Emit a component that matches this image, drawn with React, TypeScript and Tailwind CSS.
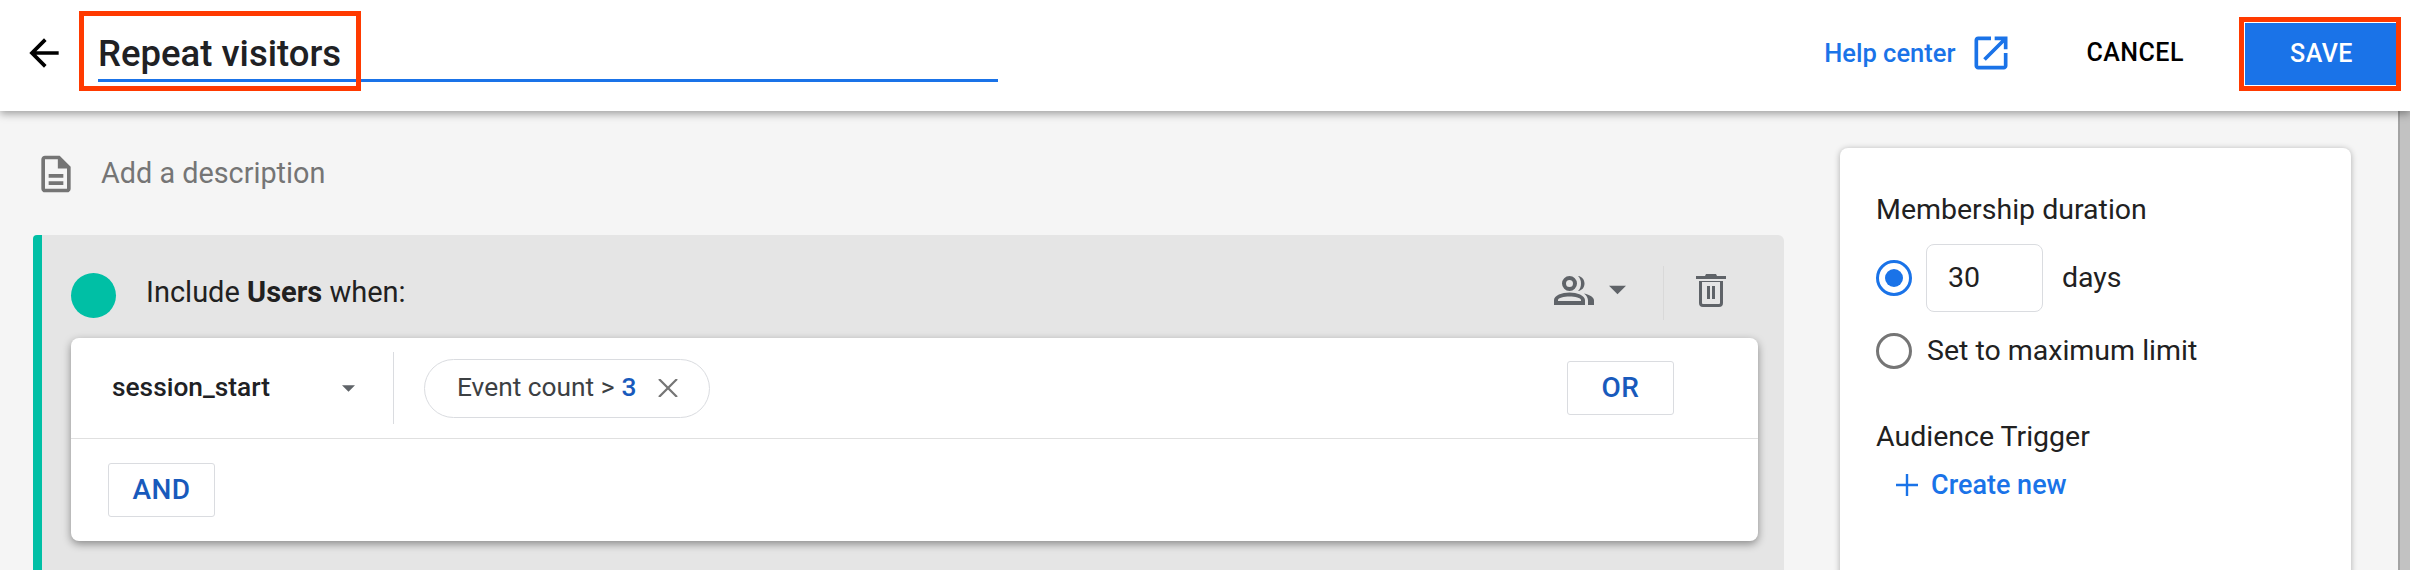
const font = "font-['Roboto',sans-serif]";

function Triangle({ className }: { className: string }) {
  return (
    <svg viewBox="0 0 10 5" className={className}>
      <path d="M0 0h10L5 5z" fill="currentColor" />
    </svg>
  );
}

function RadioOption({ checked }: { checked?: boolean }) {
  return (
    <span
      className={`flex w-[36px] h-[36px] shrink-0 items-center justify-center rounded-full border-[3px] ${
        checked ? "border-[#1a73e8]" : "border-[#757575]"
      }`}
    >
      {checked && <span className="w-[18px] h-[18px] rounded-full bg-[#1a73e8]" />}
    </span>
  );
}

function OutlineButton({ label }: { label: string }) {
  return (
    <button className="flex h-[54px] w-[107px] items-center justify-center rounded-[3px] border border-[#dadce0] bg-white text-[28px] font-medium tracking-[0.5px] text-[#185abc]">
      {label}
    </button>
  );
}

export default function App() {
  return (
    <div className={`${font} relative flex h-[570px] w-[2410px] flex-col overflow-hidden bg-[#f5f5f5] text-[#212121]`}>
      <header className="relative z-10 flex h-[111px] shrink-0 items-center bg-white pb-[5px] pl-[22px] pr-[14px] shadow-[0_3px_8px_rgba(0,0,0,0.35)]">
        <svg viewBox="0 0 24 24" className="h-[44px] w-[44px] shrink-0 text-black">
          <path fill="currentColor" d="M20 11H7.83l5.59-5.59L12 4l-8 8 8 8 1.41-1.41L7.83 13H20v-2z" />
        </svg>
        <div className="ml-[32px] h-[58px] w-[900px] border-b-[3px] border-[#1a73e8] text-[36.5px] font-medium leading-[60px] text-[#202124]">
          Repeat visitors
        </div>
        <div className="ml-auto flex items-center">
          <span className="text-[25.5px] font-medium text-[#1a73e8]">Help center</span>
          <svg viewBox="0 0 24 24" className="ml-[14px] h-[44px] w-[44px] text-[#1a73e8]">
            <path fill="currentColor" d="M19 19H5V5h7V3H5c-1.11 0-2 .9-2 2v14c0 1.1.89 2 2 2h14c1.1 0 2-.9 2-2v-7h-2v7zM14 3v2h3.59l-9.83 9.83 1.41 1.41L19 6.41V10h2V3h-7z" />
          </svg>
          <span className="ml-[73px] text-[25px] font-medium tracking-[0.5px] text-black">CANCEL</span>
          <button className="ml-[61px] mt-[2px] flex h-[62px] w-[151px] items-center justify-center bg-[#1a73e8] pl-[2px] text-[25px] font-medium tracking-[0.5px] text-white">
            SAVE
          </button>
        </div>
      </header>

      <div className="flex min-h-0 flex-1">
        <main className="flex w-[1751px] ml-[33px] shrink-0 flex-col">
          <div className="mt-[44px] ml-[1px] flex h-[37px] items-center">
            <svg viewBox="0 0 24 24" className="h-[44px] w-[44px] shrink-0 text-[#757575]">
              <path fill="currentColor" d="M8 16h8v2H8zm0-4h8v2H8zm6-10H6c-1.1 0-2 .9-2 2v16c0 1.1.89 2 1.99 2H18c1.1 0 2-.9 2-2V8l-6-6zm4 18H6V4h7v5h5v11z" />
            </svg>
            <span className="ml-[23px] text-[28.8px] text-[#757575]">Add a description</span>
          </div>

          <section className="mt-[43px] flex-1 rounded-tr-[6px] rounded-tl-[4px] border-l-[9px] border-[#00bfa5] bg-[#e5e5e5] pl-[29px] pr-[26px]">
            <div className="flex h-[103px] items-center pt-[17px]">
              <span className="h-[45px] w-[45px] rounded-full bg-[#00bfa5]" />
              <span className="mb-[4px] ml-[30px] text-[29px] text-[#212121]">
                Include <b className="font-bold">Users</b> when:
              </span>
              <div className="mb-[10px] ml-auto flex items-center text-[#5f6368]">
                <svg viewBox="0 0 40 29" className="h-[29px] w-[40px]">
                  <path fill="currentColor" fillRule="evenodd" d="M15.500 0a7.500 7.500 0 1 1 0 15a7.500 7.500 0 0 1 0-15zm0 4a3.500 3.500 0 1 0 0 7a3.500 3.500 0 0 0 0-7zM0 29v-5c0-4.500 8-7.500 15.500-7.500S31 19.500 31 24v5zm4-4h23v-1c0-2-6-3.500-11.500-3.500S4 22 4 24z" />
                  <path fill="currentColor" d="M24 0c4.500.5 6.500 4 6.500 7.500S28.500 14.500 24 15c2-2 3-4.500 3-7.500S26 2 24 0zM30 17.500c6 1.500 10 3.500 10 7V29h-6v-4.500c0-2.500-1.500-5-4-7z" />
                </svg>
                <Triangle className="ml-[15px] h-[10px] w-[17px]" />
                <span className="ml-[37px] mr-[32px] mt-[6px] h-[54px] w-px bg-[#d9d9d9]" />
                <svg viewBox="0 0 30 33" className="mr-[32px] h-[33px] w-[30px]">
                  <path fill="currentColor" fillRule="evenodd" d="M10 0h10l1 2h9v3H0V2h9zM3 7h24v22a4 4 0 0 1-4 4H7a4 4 0 0 1-4-4zm3 1v21a1 1 0 0 0 1 1h16a1 1 0 0 0 1-1V8zm5 4h3v13h-3zm5 0h3v13h-3z" />
                </svg>
              </div>
            </div>

            <div className="h-[203px] rounded-[8px] bg-white shadow-[0_3px_8px_rgba(0,0,0,0.4)]">
              <div className="flex h-[101px] items-center border-b border-[#e0e0e0] pl-[41px]">
                <span className="w-[230px] text-[26.3px] font-medium text-[#202124]">session_start</span>
                <Triangle className="h-[7px] w-[13px] text-[#5f6368]" />
                <span className="ml-[38px] h-[72px] w-px bg-[#dadce0]" />
                <div className="ml-[30px] flex h-[59px] w-[286px] items-center rounded-full border border-[#dadce0] pl-[32px] text-[26.3px]">
                  <span className="text-[#3c4043]">Event count &gt;</span>
                  <span className="ml-[7px] font-medium text-[#185abc]">3</span>
                  <svg viewBox="0 0 20 18" className="ml-[22px] h-[18px] w-[20px] text-[#757575]">
                    <path stroke="currentColor" strokeWidth="2.2" d="M1 0l18 18M19 0L1 18" fill="none" />
                  </svg>
                </div>
                <div className="ml-auto mr-[84px]">
                  <OutlineButton label="OR" />
                </div>
              </div>
              <div className="pl-[37px] pt-[24px]">
                <OutlineButton label="AND" />
              </div>
            </div>
          </section>
        </main>

        <aside className="ml-[56px] mt-[37px] h-[500px] w-[511px] rounded-[8px] bg-white pl-[36px] shadow-[0_1px_6px_rgba(0,0,0,0.3)]">
          <div className="flex h-[82px] items-end text-[28.5px] leading-[40px]">Membership duration</div>
          <div className="mt-[14px] flex items-center">
            <RadioOption checked />
            <div className="ml-[14px] flex h-[68px] w-[117px] items-center rounded-[8px] border border-[#dadce0] pl-[21px] text-[28.5px]">30</div>
            <span className="ml-[19px] text-[28.5px]">days</span>
          </div>
          <div className="mt-[18px] flex items-center">
            <RadioOption />
            <span className="ml-[15px] text-[28.5px]">Set to maximum limit</span>
          </div>
          <div className="mt-[44px] text-[28.5px] leading-[40px]">Audience Trigger</div>
          <div className="ml-[20px] mt-[8px] flex items-center text-[#1a73e8]">
            <svg viewBox="0 0 22 22" className="h-[22px] w-[22px]">
              <path stroke="currentColor" strokeWidth="2.4" d="M11 0v22M0 11h22" fill="none" />
            </svg>
            <span className="ml-[13px] text-[27px] font-medium">Create new</span>
          </div>
        </aside>

        <div className="ml-auto w-[12px] border-l-2 border-[#a3a3a3] bg-[#c2c2c2]" />
      </div>

      <div className="absolute left-[79px] top-[11px] z-20 h-[80px] w-[282px] border-[5px] border-[#ff3a00]" />
      <div className="absolute left-[2239px] top-[17px] z-20 h-[74px] w-[162px] border-[5px] border-[#ff3a00]" />
    </div>
  );
}
